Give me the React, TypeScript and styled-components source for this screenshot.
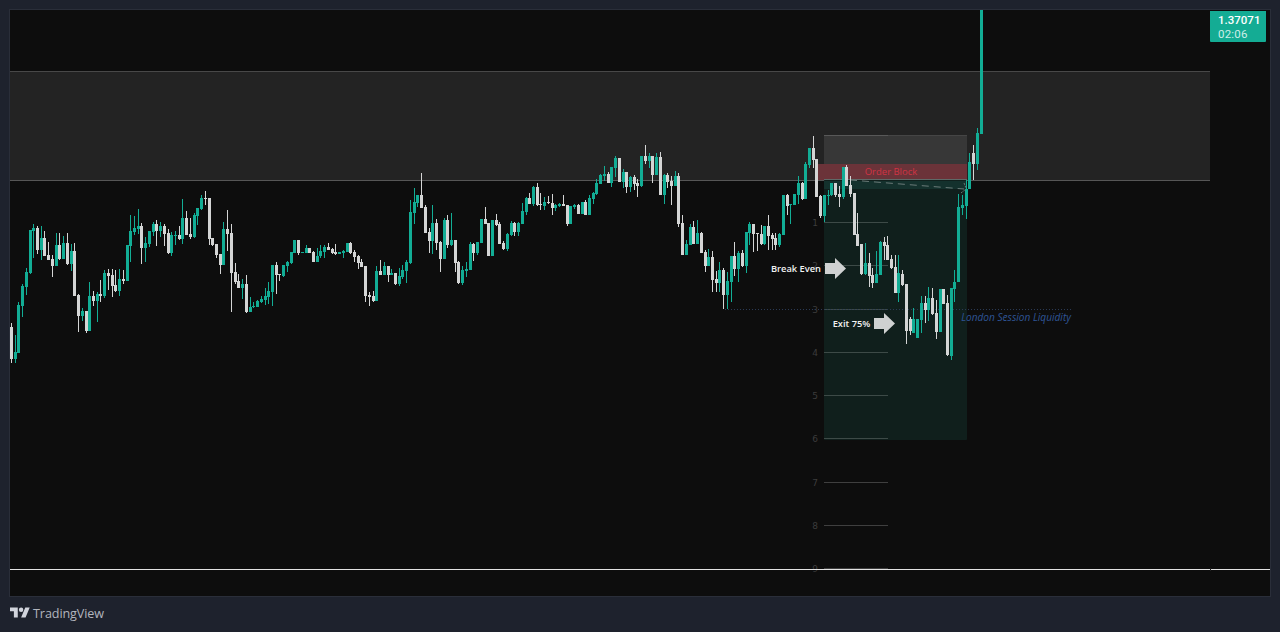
import React from "react";
import styled, { createGlobalStyle } from "styled-components";

type C = [number, number, number, number, number, number];

const GlobalStyle = createGlobalStyle`
  html, body { margin: 0; padding: 0; background: #1e222d; }
  #root { width: 1280px; height: 632px; overflow: hidden; }
`;

const Page = styled.div`
  width: 1280px;
  height: 632px;
  display: flex;
  flex-direction: column;
  padding: 9px 9px 0 9px;
  box-sizing: border-box;
  background: #1e222d;
`;
const Frame = styled.div`
  position: relative;
  width: 1262px;
  height: 588px;
  box-sizing: border-box;
  border: 1px solid #2a2e39;
  background: #0d0d0d;
  flex: none;
`;
const Chart = styled.svg`
  display: block;
  width: 1260px;
  height: 586px;
`;
const PriceTag = styled.div`
  position: absolute;
  top: 1px;
  left: 1200px;
  width: 56px;
  height: 31px;
  box-sizing: border-box;
  padding: 2px 0 0 8px;
  background: #14ac94;
  border-radius: 0 0 1px 1px;
  font-family: Roboto, "Liberation Sans", sans-serif;
  font-size: 11.5px;
  font-weight: 500;
  line-height: 14px;
  color: #fff;
`;
const Countdown = styled.div`
  color: #cdeee8;
  font-weight: 400;
  letter-spacing: 0.2px;
`;
const Footer = styled.div`
  flex: 1;
  display: flex;
  align-items: center;
  gap: 3px;
  padding: 0 0 3px 1px;
  box-sizing: border-box;
  color: #b2b5be;
  font-family: "Open Sans", "Liberation Sans", sans-serif;
  font-size: 12.6px;
  letter-spacing: -0.1px;
`;
const Logo = styled.svg`
  width: 20px;
  height: 16px;
  fill: #d1d4dc;
`;

const GREEN = "#12ad95";
const WHITE = "#d4d5d5";

const seg1: C[] = [
  [35,1,579,591,687,699],[47,0,615,666,687,699],[55,0,517,525,669,669],[67,0,462,468,527,560],[79,0,415,426,471,495],[91,0,300,300,430,432],[100,0,282,294,303,384],[112,1,288,294,360,372],[124,0,288,324,360,390],[133,1,303,324,378,378],[145,1,336,375,390,390],[157,1,375,387,408,441],[169,0,309,345,408,408],[178,1,309,345,387,390],[190,0,318,339,387,387],[202,1,309,339,402,405],[214,0,342,363,402,423],[223,1,339,363,498,498],[235,1,492,495,558,606],[247,0,534,543,558,573],[259,1,543,543,603,609],[268,0,456,498,603,603],[280,1,483,498,513,528],[292,0,486,492,513,576],[301,1,450,492,498,516],[313,0,420,429,498,504],[325,1,417,429,438,480],[337,1,417,435,468,501],[346,1,420,465,483,486],[358,0,417,447,483,498],[370,1,420,447,453,462],[382,0,345,345,453,453],[391,0,255,303,348,396],[403,0,258,294,306,315],[415,0,237,288,297,312],[424,1,279,288,354,402],[436,0,321,339,354,396],[448,0,303,303,342,351],[460,0,276,282,306,318],[469,1,270,282,303,348],[481,0,276,288,303,321],[493,1,282,288,312,348],[505,1,297,309,369,372],[514,0,306,315,369,378],[526,0,303,315,318,345],[538,1,288,315,327,330],[547,0,207,264,327,342],[559,1,243,264,315,315],[571,1,264,312,321,327],[583,0,249,255,321,324],[592,0,234,234,258,285],[604,0,195,204,237,240],[616,1,183,204,207,225],[628,1,204,204,327,345],[637,1,324,324,345,348],[649,1,342,342,375,384],[661,1,372,372,405,432],[670,0,276,297,405,405],[682,1,240,297,312,363],[694,1,282,309,429,546],[706,1,399,426,456,462],[715,1,432,453,474,474],[727,0,447,462,474,507],[739,1,435,462,546,549],[751,0,501,531,546,546],[760,0,516,528,531,534],[772,0,510,513,531,531],
];
const seg2: C[] = [
  [4,0,498,507,516,519],[16,0,474,498,510,525],[25,0,456,483,501,522],[37,0,405,405,486,528],[49,1,396,405,435,492],[58,1,432,432,435,453],[70,0,405,405,438,441],[82,0,393,396,408,426],[94,0,366,366,399,402],[103,0,330,330,369,369],[115,1,330,330,369,375],[127,0,366,366,369,369],[139,0,345,354,369,369],[148,1,354,354,369,369],[160,1,363,366,396,396],[172,0,354,378,396,396],[181,0,345,363,378,384],[193,0,345,351,366,384],[205,1,339,351,360,360],[217,1,354,358,369,372],[226,1,342,366,372,375],[238,0,366,366,372,372],[250,0,360,363,369,384],[262,0,339,339,366,366],[271,1,336,339,369,372],[283,1,360,366,381,396],[295,1,375,378,399,417],[304,1,387,396,411,411],[316,1,408,408,498,516],[328,1,486,495,501,528],[340,1,483,498,513,516],[349,0,408,423,513,513],[361,1,390,423,435,435],[373,0,396,408,435,435],[385,1,408,408,435,456],[394,0,417,429,435,435],[406,1,429,429,462,465],[418,0,414,438,462,468],[427,0,405,420,441,447],[439,0,390,396,423,459],[451,0,210,246,399,402],[463,0,174,216,249,282],[472,0,195,195,219,231],[484,1,129,195,234,234],[496,1,225,231,309,309],[508,1,294,306,333,369],[517,0,225,279,333,372],[529,1,267,279,339,360],[541,1,333,336,387,426],[553,0,264,270,387,387],[562,1,255,270,345,354],[574,0,249,330,345,348],[586,1,330,330,399,426],[595,1,393,396,459,462],[607,0,408,420,459,465],[619,0,396,417,423,441],[631,0,336,342,420,420],[640,1,339,342,369,393],[652,0,336,336,369,375],[664,0,267,267,339,339],[676,1,231,267,282,282],[685,1,279,279,378,378],[697,0,270,270,378,378],[709,1,252,270,285,288],[718,1,276,282,342,342],[730,1,333,339,357,360],[742,0,309,312,357,363],[754,0,273,279,315,318],[763,1,276,279,306,318],[775,0,276,279,306,318],
];
const seg3: C[] = [
  [7,0,219,243,282,282],[19,0,201,204,246,255],[28,1,189,204,222,222],[40,0,168,171,222,228],[52,1,159,171,225,228],[61,1,189,222,225,240],[73,0,201,216,228,240],[85,1,198,216,219,222],[97,1,192,219,234,255],[106,0,222,225,234,243],[118,0,219,222,228,231],[130,1,195,222,228,228],[142,1,225,225,282,288],[151,0,228,228,282,282],[163,0,222,225,231,237],[175,1,222,225,252,252],[187,0,216,216,252,252],[196,1,210,216,255,255],[208,0,195,204,255,255],[220,0,186,189,207,222],[229,0,147,159,192,195],[241,0,132,135,162,162],[253,0,108,132,138,153],[265,1,126,132,159,159],[274,0,111,111,159,171],[286,0,78,84,114,141],[298,1,84,84,156,156],[310,0,117,126,156,174],[319,1,126,126,171,189],[331,0,138,141,171,186],[343,1,135,141,162,180],[352,1,147,159,168,201],[364,0,78,78,168,171],[376,1,45,78,93,102],[388,0,69,78,93,114],[397,1,78,78,135,159],[409,0,69,81,135,135],[421,1,66,81,195,195],[433,0,132,135,195,222],[442,1,129,135,156,174],[454,1,138,153,168,225],[466,0,123,138,168,168],[475,1,129,138,282,291],[487,1,255,279,375,375],[499,0,330,342,375,375],[511,0,282,291,345,345],[520,1,273,291,342,342],[532,0,270,309,342,342],[544,1,306,309,369,369],[556,1,360,366,408,426],[565,0,357,381,408,408],[577,1,363,381,450,486],[589,1,423,447,459,486],[598,0,396,420,459,486],[610,1,414,420,495,537],[622,0,426,453,495,537],[634,0,378,378,456,516],[643,1,336,378,417,438],[655,0,363,369,417,456],[667,1,360,369,408,411],[679,0,306,306,408,429],[688,0,276,282,309,345],[700,1,282,282,312,366],[712,1,309,309,309,363],
];
const seg4: C[] = [
  [5,1,315,343,372,375],[13,0,318,318,372,375],[25,1,285,318,348,390],[37,1,340,345,357,390],[46,1,339,354,375,390],[58,0,339,342,375,381],[70,0,225,225,345,345],[82,1,222,225,258,285],[91,0,252,252,252,312],[103,0,222,222,255,255],[115,0,168,189,225,252],[127,1,186,189,237,240],[136,0,126,132,237,237],[148,0,84,84,135,144],[160,1,48,84,120,144],[169,1,117,117,231,231],[181,1,225,228,288,294],[193,0,225,225,288,306],[205,0,210,225,228,255],[214,0,189,189,225,228],[226,1,189,189,225,231],[238,1,198,222,231,261],[250,0,141,141,231,237],[259,1,135,141,198,198],[271,1,168,195,222,231],[283,1,219,219,345,345],[292,1,279,342,378,378],[304,1,372,372,462,465],[316,0,369,429,462,465],[328,1,399,429,468,501],[337,1,444,465,489,504],[349,0,393,462,489,489],[361,0,363,366,465,465],[373,1,351,366,378,420],[382,1,348,375,420,420],[394,1,405,417,444,447],[406,1,405,441,519,519],[415,0,405,459,519,546],[427,1,450,462,495,498],[439,1,492,492,633,672],[451,1,591,597,633,645],[460,0,564,597,639,639],[472,0,597,597,654,654],[484,0,529,549,600,639],[496,1,528,549,570,609],[505,0,501,534,570,603],[517,1,504,534,582,585],[529,1,540,579,636,657],[541,0,507,507,636,636],[550,1,507,507,552,552],[562,1,525,549,705,708],[574,0,504,504,708,720],[583,0,450,486,507,546],[595,0,222,261,486,486],[607,0,225,255,264,285],[619,0,180,207,258,297],[628,0,99,126,207,207],[640,1,75,99,132,180],[652,0,24,39,132,150],[664,0,-330,-330,42,42],
];

const segments: { x: number; y: number; items: C[] }[] = [
  { x: 0, y: 130, items: seg1 },
  { x: 260, y: 130, items: seg2 },
  { x: 520, y: 130, items: seg3 },
  { x: 760, y: 120, items: seg4 },
];

const Candles = () => (
  <g shapeRendering="crispEdges">
    {segments.flatMap((s, si) =>
      s.items.map(([zx, white, wt, bt, bb, wb], i) => {
        const left = Math.floor(s.x + zx / 3 - 1);
        const fill = white ? WHITE : GREEN;
        const top = s.y + bt / 3;
        const bottom = s.y + bb / 3;
        return (
          <g key={`${si}-${i}`} fill={fill}>
            <rect x={left + 1} y={Math.round(s.y + wt / 3)} width={1} height={Math.max(1, Math.round((wb - wt) / 3))} />
            <rect x={left} y={Math.round(top)} width={3} height={Math.max(1, Math.round(bottom - top))} />
          </g>
        );
      })
    )}
  </g>
);

const fibs = [222, 265, 309, 352, 395, 438, 482, 525, 568];

const Arrow = ({ x, y }: { x: number; y: number }) => (
  <path d={`M${x} ${y - 5.5}h10v-5l11 10.5 -11 10.5v-5h-10z`} fill="#cfd1d1" />
);

export default function App() {
  return (
    <>
      <GlobalStyle />
      <Page>
        <Frame>
          <Chart viewBox="10 10 1260 586">
            <rect x="10" y="71" width="1200" height="110" fill="#232323" />
            <rect x="10" y="71" width="1200" height="1" fill="#484848" shapeRendering="crispEdges" />
            <rect x="10" y="180" width="1200" height="1" fill="#565656" shapeRendering="crispEdges" />

            <rect x="824" y="135" width="143" height="46" fill="#373737" />
            <rect x="824" y="135" width="64" height="1" fill="#585858" />
            <rect x="888" y="135" width="79" height="1" fill="#454545" />
            <rect x="824" y="180" width="143" height="260" rx="1" fill="#101f1c" />
            <rect x="824" y="181" width="143" height="8" fill="#14312d" />
            <rect x="818" y="164" width="149" height="16" fill="#6b3339" />
            <rect x="824" y="179" width="143" height="1" fill="#5f6a68" />

            {fibs.map((y, i) => (
              <g key={y}>
                <rect x="824" y={y} width="64" height="1" fill={i < 6 ? "#3d4a47" : "#3f3f3f"} shapeRendering="crispEdges" />
                <text x="815" y={y + 3.5} textAnchor="middle" fontFamily="'DejaVu Sans', sans-serif" fontSize="9" fill="#3c3c3c">
                  {i + 1}
                </text>
              </g>
            ))}

            <text x="891" y="175" textAnchor="middle" fontFamily="'Open Sans', sans-serif" fontSize="9.5" fill="#d03344">
              Order Block
            </text>

            <line x1="725" y1="309.5" x2="1072" y2="309.5" stroke="#2b3a55" strokeDasharray="1 2" />
            <line x1="850" y1="180" x2="964" y2="189" stroke="#6a7a78" strokeDasharray="7 5" />

            <Candles />

            <path d="M961 193l5-4M964 183l2 5" stroke="#6a7a78" fill="none" strokeDasharray="2 1" />
            <rect x="10" y="569" width="1260" height="1" fill="#e2e2e2" shapeRendering="crispEdges" />
            <rect x="1210" y="568" width="1" height="3" fill="#222" shapeRendering="crispEdges" />

            <text x="1016" y="321" textAnchor="middle" fontFamily="'Open Sans', sans-serif" fontStyle="italic" fontSize="10.1" fill="#2f5596">
              London Session Liquidity
            </text>
            <text x="796" y="272" textAnchor="middle" fontFamily="'Open Sans', sans-serif" fontWeight="600" fontSize="9.3" fill="#f2f2f2">
              Break Even
            </text>
            <Arrow x={825} y={268.5} />
            <text x="851.5" y="327" textAnchor="middle" fontFamily="'Open Sans', sans-serif" fontWeight="600" fontSize="9.3" fill="#f2f2f2">
              Exit 75%
            </text>
            <Arrow x={874} y={323.5} />
          </Chart>
          <PriceTag>
            1.37071
            <Countdown>02:06</Countdown>
          </PriceTag>
        </Frame>
        <Footer>
          <Logo viewBox="0 0 36 28">
            <path d="M14 22H7V11H0V4h14v18zM28 22h-8l7.5-18h8L28 22z" />
            <circle cx="20" cy="8" r="4" />
          </Logo>
          TradingView
        </Footer>
      </Page>
    </>
  );
}
